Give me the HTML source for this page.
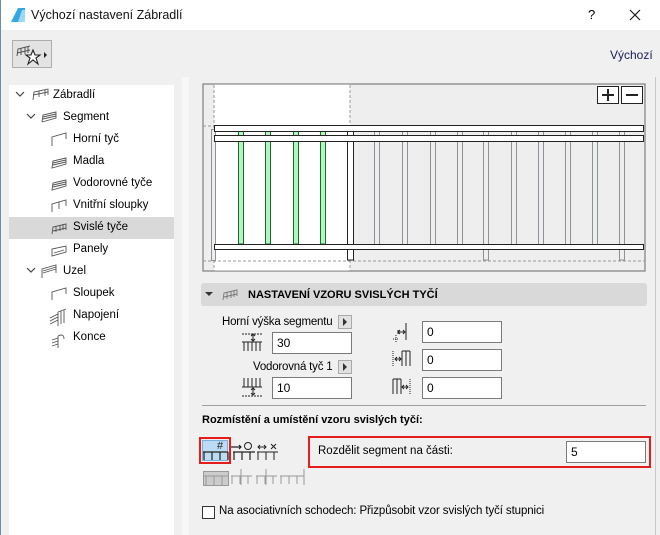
<!DOCTYPE html>
<html><head><meta charset="utf-8"><style>
*{box-sizing:border-box;margin:0;padding:0}
body{width:660px;height:535px;overflow:hidden;background:#f0f0f0;font-family:"Liberation Sans","DejaVu Sans",sans-serif;font-size:11.5px;color:#000;position:relative}
.a{position:absolute}
.t{position:absolute;white-space:nowrap}
.inp{position:absolute;background:#fff;border:1px solid #7a7a7a;height:22px;padding:3px 4px;font-size:12px}
.tr{position:absolute;font-size:11.5px;white-space:nowrap}
</style></head><body>
<div class="a" style="left:0;top:0;width:1px;height:535px;background:#6e8bab"></div>
<div class="a" style="left:1px;top:0;width:659px;height:30px;background:#fff"></div>
<svg class="a" style="left:9px;top:6px" width="18" height="18" viewBox="0 0 18 18"><path d="M2 16 L9 2 L16 2 L16 16 Z" fill="#35a7e0"/><path d="M9 16 L13 4 L16 4 L16 16Z" fill="#9ad8f5"/></svg>
<div class="t" style="left:31px;top:8px;font-size:12.5px;color:#111">Výchozí nastavení Zábradlí</div>
<div class="t" style="left:588px;top:7px;font-size:13px">?</div>
<svg class="a" style="left:629px;top:9px" width="12" height="12"><path d="M1 1L11 11M11 1L1 11" stroke="#222" stroke-width="1.2"/></svg>

<div class="a" style="left:12px;top:40px;width:40px;height:28px;background:#e3e3e3;border:1px solid #adadad"></div>
<svg class="a" style="left:15px;top:43px" width="36" height="24" viewBox="0 0 36 24"><path d="M2 13L3 6L15 3M2 10L15 7M6 5V12M10 4V11M13 3V10" stroke="#555" fill="none" stroke-width="1"/><path d="M18 7L20 12L25 12L21 15L23 21L18 17L13 21L15 15L11 12L16 12Z" fill="#fff" stroke="#222" stroke-width="1.1"/><path d="M29 9L32 12L29 15Z" fill="#222"/></svg>
<div class="t" style="left:610px;top:48px;color:#1a1a5a;font-size:12px">Výchozí</div>

<div class="a" style="left:9px;top:85px;width:165px;height:450px;background:#fff"></div>
<div class="a" style="left:182px;top:77px;width:7px;height:458px;background:#f7f7f7"></div>
<div class="a" style="left:9px;top:217px;width:165px;height:22px;background:#d9d9d9"></div>
<svg class="a" style="left:14px;top:88px" width="170" height="260">
<g stroke="#444" fill="none" stroke-width="1.2"><path d="M2 4L6 8L10 4"/><path d="M13 26L17 30L21 26"/><path d="M13 180L17 184L21 180"/></g>
<g stroke="#555" fill="none" stroke-width="0.9">
<path d="M19 12L20 4L34 1V7M19 7L34 4M25 3V9M31 2V8"/>
<path d="M28 34L29 27L42 24V30L28 34M29 29L42 26M29 31L42 28"/>
<path d="M38 58V49L52 45V51"/>
<path d="M38 80L39 73L52 70V76ZM39 75L52 72M39 77L52 74"/>
<path d="M38 102L39 95L52 92V98ZM39 97L52 94M39 99L52 96"/>
<path d="M38 124V116L52 112V118M45 114V121"/>
<path d="M38 146L39 139L52 136V142M39 143L52 140M42 138V144M46 137V143M49 136V142"/>
<path d="M38 168V161L52 158V164ZM40 165L50 162"/>
<path d="M28 190V181L42 177V185M29 183L42 179M29 185L42 181"/>
<path d="M38 212V204L52 200V206"/>
<path d="M36 233L44 229M36 230L44 226M36 236L44 232M44 224V238M44 224L52 221M47 223V236M50 222V235"/>
<path d="M38 255L44 253M38 252L44 250M38 258L44 256M44 248V262M44 248Q50 245 50 251"/>
</g></svg>
<div class="tr" style="left:53px;top:89px">Zábradlí</div>
<div class="tr" style="left:63px;top:111px">Segment</div>
<div class="tr" style="left:73px;top:133px">Horní tyč</div>
<div class="tr" style="left:73px;top:155px">Madla</div>
<div class="tr" style="left:73px;top:177px">Vodorovné tyče</div>
<div class="tr" style="left:73px;top:199px">Vnitřní sloupky</div>
<div class="tr" style="left:73px;top:221px">Svislé tyče</div>
<div class="tr" style="left:73px;top:243px">Panely</div>
<div class="tr" style="left:63px;top:265px">Uzel</div>
<div class="tr" style="left:73px;top:287px">Sloupek</div>
<div class="tr" style="left:73px;top:309px">Napojení</div>
<div class="tr" style="left:73px;top:331px">Konce</div>

<div class="a" style="left:655px;top:77px;width:1px;height:458px;background:#c8c8c8"></div>

<svg class="a" style="left:202px;top:83px" width="445" height="190" viewBox="202 83 445 190">
<rect x="203" y="84" width="442" height="187" fill="#eee" stroke="#7e7e7e" stroke-width="1.2"/>
<rect x="214" y="84.6" width="136" height="186" fill="#fff"/>
<g stroke="#999" stroke-dasharray="3,2" fill="none"><path d="M214 85V271M350 85V271M203 126H214M203 261H645"/></g>
<g fill="#eee" stroke="#8d9296" stroke-width="1"><rect x="211.5" y="129.5" width="4" height="131"/>
<path d="M374.5 131V244M379.5 131V244M402.5 131V244M407.5 131V244M430.5 131V244M435.5 131V244M457.5 131V244M462.5 131V244M511.5 131V244M516.5 131V244M538.5 131V244M543.5 131V244M565.5 131V244M570.5 131V244M592.5 131V244M597.5 131V244"/>
<rect x="483.5" y="131" width="5" height="129"/><rect x="619.5" y="131" width="5" height="129"/></g>
<g fill="#aef7c0" stroke="#1b6b2c" stroke-width="1"><rect x="238.5" y="131" width="5" height="113"/><rect x="265.5" y="131" width="5" height="113"/><rect x="293.5" y="131" width="5" height="113"/><rect x="320.5" y="131" width="5" height="113"/></g>
<rect x="347.5" y="131" width="6" height="129" fill="#fff" stroke="#222"/>
<g fill="#fff" stroke="#222" stroke-width="1"><rect x="214.5" y="125.5" width="429" height="6"/><rect x="214.5" y="135.5" width="429" height="6"/><rect x="214.5" y="244.5" width="429" height="5"/></g>
<g fill="#fff" stroke="#222"><rect x="597.5" y="86.5" width="21" height="17"/><rect x="621.5" y="86.5" width="21" height="17"/></g>
<path d="M602 95H614M608 89V101M626 95H638" stroke="#222" stroke-width="2"/>
</svg>

<div class="a" style="left:201px;top:283px;width:446px;height:23px;background:#d9d9d9;border-radius:3px"></div>
<svg class="a" style="left:205px;top:288px" width="36" height="14"><path d="M0 4L8 4L4 8Z" fill="#333"/><path d="M18 12L19 5L32 2V8M19 9L32 6M22 4V11M26 3V10M29 3V9" stroke="#777" fill="none" stroke-width="0.9"/></svg>
<div class="t" style="left:248px;top:289px;font-weight:bold;font-size:11px">NASTAVENÍ VZORU SVISLÝCH TYČÍ</div>

<div class="t" style="left:222px;top:316px;font-size:11.5px;letter-spacing:-0.2px">Horní výška segmentu</div>
<div class="a" style="left:338px;top:315px;width:14px;height:14px;background:#e1e1e1;border:1px solid #aaa"></div>
<svg class="a" style="left:341px;top:318px" width="8" height="8"><path d="M2 0L6 4L2 8Z" fill="#333"/></svg>
<div class="t" style="left:253px;top:361px;letter-spacing:-0.2px">Vodorovná tyč 1</div>
<div class="a" style="left:338px;top:360px;width:14px;height:14px;background:#e1e1e1;border:1px solid #aaa"></div>
<svg class="a" style="left:341px;top:363px" width="8" height="8"><path d="M2 0L6 4L2 8Z" fill="#333"/></svg>
<div class="inp" style="left:272px;top:332px;width:80px">30</div>
<div class="inp" style="left:272px;top:377px;width:80px">10</div>
<div class="inp" style="left:422px;top:321px;width:80px">0</div>
<div class="inp" style="left:422px;top:349px;width:80px">0</div>
<div class="inp" style="left:422px;top:377px;width:80px">0</div>
<svg class="a" style="left:242px;top:330px" width="30" height="70" stroke="#222" fill="none" stroke-width="1">
<path d="M0 12H20M2 12V21M6 12V21M10 12V21M14 12V21M18 12V21M11 4V11M9 6L11 4L13 6M9 9L11 11L13 9" /><path d="M0 4H20" stroke-dasharray="2,1"/>
<path d="M2 48V57M6 48V57M10 48V57M14 48V57M18 48V57M0 57H20M11 58V65M9 60L11 58L13 60M9 63L11 65L13 63"/><path d="M0 66H20" stroke-dasharray="2,1"/>
</svg>
<svg class="a" style="left:392px;top:320px" width="30" height="80" stroke="#222" fill="none" stroke-width="1">
<path d="M14 3V20M6 12H13M6 10V14M8 10L6 12L8 14M11 10L13 12L11 14"/><path d="M4 15V22M1 19H7" stroke-dasharray="1,1"/>
<path d="M10 31V46M14 31V46M18 31V46M10 31H18M3 39H9M5 37L3 39L5 41M7 37L9 39L7 41"/><path d="M1 31V46" stroke-dasharray="1,1"/>
<path d="M1 59V74M5 59V74M9 59V74M1 59H9M10 67H16M12 65L10 67L12 69M14 65L16 67L14 69"/><path d="M18 59V74" stroke-dasharray="1,1"/>
</svg>

<div class="a" style="left:202px;top:405px;width:444px;height:1px;background:#a0a0a0"></div>
<div class="t" style="left:202px;top:414px;font-weight:bold;font-size:11px">Rozmístění a umístění vzoru svislých tyčí:</div>

<div class="a" style="left:199px;top:437px;width:32px;height:27px;border:2px solid #e51c1c"></div>
<div class="a" style="left:202px;top:440px;width:26px;height:21px;background:#bcdcf4;border:1px solid #7ab0dd"></div>
<svg class="a" style="left:200px;top:438px" width="110" height="60" fill="none" stroke="#222" stroke-width="1.2">
<text x="17" y="11" font-size="11" fill="#222" stroke="none" font-family="Liberation Sans">#</text>
<path d="M3 14H28M4 14V22M12 14V22M20 14V22M28 14V22"/>
<path d="M33 14H55M34 14V22M42 14V22M50 14V22M31 9H41M39 7L41 9L39 11"/><circle cx="48" cy="8" r="3.5" stroke-width="1"/>
<path d="M57 14H78M58 14V22M66 14V22M74 14V22M58 9H66M60 7L58 9L60 11M64 7L66 9L64 11M71 6L76 11M76 6L71 11" stroke-width="1"/>
<g stroke="#999" stroke-width="1"><rect x="3.5" y="33.5" width="25" height="14" fill="#ccc"/><path d="M3 38H29M6 38V47M14 38V47M22 38V47"/>
<path d="M31 38H52M32 38V46M40 38V46M48 38V46M41 31V47M56 38H77M57 38V46M65 38V46M73 38V46M66 31V47M80 38H104M81 38V46M89 38V46M97 38V46M104 31V47"/></g>
</svg>

<div class="a" style="left:308px;top:436px;width:343px;height:32px;border:2px solid #e51c1c"></div>
<div class="t" style="left:318px;top:445px;font-size:11.5px">Rozdělit segment na části:</div>
<div class="inp" style="left:566px;top:441px;width:80px">5</div>

<div class="a" style="left:202px;top:506px;width:13px;height:13px;background:#fff;border:1px solid #333"></div>
<div class="t" style="left:219px;top:505px;font-size:11.5px;letter-spacing:-0.1px">Na asociativních schodech: Přizpůsobit vzor svislých tyčí stupnici</div>
</body></html>
